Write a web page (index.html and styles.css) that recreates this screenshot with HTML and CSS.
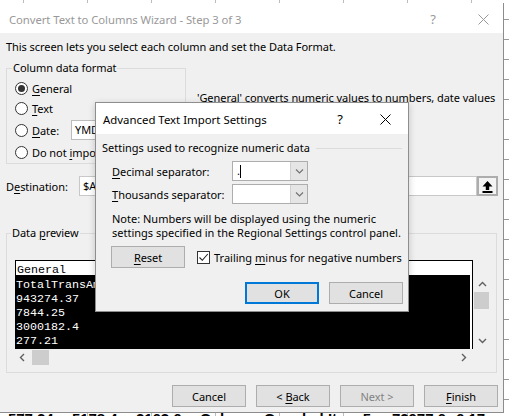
FILE: index.html
```html
<!DOCTYPE html>
<html>
<head>
<meta charset="utf-8">
<title>Convert Text to Columns Wizard</title>
<link rel="stylesheet" href="styles.css">
</head>
<body>
<div class="sheet">
  <div class="top-strip"></div>
  <div class="wizard">
    <div class="titlebar">
      <span class="title">Convert Text to Columns Wizard - Step 3 of 3</span>
      <span class="tb-help">?</span>
      <span class="tb-close"><svg width="11" height="11" viewBox="0 0 11 11"><path d="M0.5 0.5L10.5 10.5M10.5 0.5L0.5 10.5" stroke="#999" stroke-width="1" fill="none"/></svg></span>
    </div>
    <div class="content">
      <p class="intro">This screen lets you select each column and set the Data Format.</p>
      <div class="format-row">
        <fieldset class="group fmt">
          <legend>Column data format</legend>
          <div class="radios">
            <label class="radio r1"><span class="rb on"></span><span><u>G</u>eneral</span></label>
            <label class="radio r2"><span class="rb"></span><span><u>T</u>ext</span></label>
            <label class="radio r3"><span class="rb"></span><span class="date-lbl"><u>D</u>ate:</span><span class="datecombo">YMD</span></label>
            <label class="radio r4"><span class="rb"></span><span>Do not <u>i</u>mport column (skip)</span></label>
          </div>
        </fieldset>
        <div class="desc">'General' converts numeric values to numbers, date values<br>to dates, and all remaining values to text.</div>
      </div>
      <div class="dest-row">
        <span class="dest-lbl">D<u>e</u>stination:</span>
        <span class="dest-input">$A$1</span>
        <span class="dest-btn"><svg width="13" height="13" viewBox="0 0 13 13"><path d="M6.5 1L1.5 6.5H4.8V10H8.2V6.5H11.5Z" fill="#000"/><rect x="1.5" y="11" width="10" height="2" fill="#000"/></svg></span>
      </div>
      <fieldset class="group preview">
        <legend>Data <u>p</u>review</legend>
        <div class="pv">
          <div class="pv-head">General</div>
          <div class="pv-corner"></div>
          <div class="pv-data">
            <div>TotalTransAmount</div>
            <div>943274.37</div>
            <div>7844.25</div>
            <div>3000182.4</div>
            <div>277.21</div>
          </div>
          <div class="pv-vscroll">
            <svg class="sa-up" width="9" height="6" viewBox="0 0 9 6"><path d="M1 5L4.5 1.5L8 5" stroke="#606060" stroke-width="1.4" fill="none"/></svg>
            <span class="vthumb"></span>
            <svg class="sa-down" width="9" height="6" viewBox="0 0 9 6"><path d="M1 1L4.5 4.5L8 1" stroke="#606060" stroke-width="1.4" fill="none"/></svg>
          </div>
          <div class="pv-hscroll">
            <svg class="sa-left" width="6" height="9" viewBox="0 0 6 9"><path d="M5 1L1.5 4.5L5 8" stroke="#606060" stroke-width="1.4" fill="none"/></svg>
            <span class="hthumb"></span>
            <svg class="sa-right" width="6" height="9" viewBox="0 0 6 9"><path d="M1 1L4.5 4.5L1 8" stroke="#606060" stroke-width="1.4" fill="none"/></svg>
          </div>
        </div>
      </fieldset>
      <div class="buttons">
        <button class="btn"><span>Cancel</span></button>
        <button class="btn"><span>&lt; <u>B</u>ack</span></button>
        <button class="btn disabled"><span>Next &gt;</span></button>
        <button class="btn"><span><u>F</u>inish</span></button>
      </div>
    </div>
  </div>
  <div class="bottom-strip">
    <span>577.24</span><span>5178.4</span><span>2163.6</span><span>Column</span><span>Coupled</span><span>Item.5</span><span>72977.6</span><span>6.17</span>
  </div>

  <div class="dialog">
    <div class="dlg-title">
      <span class="dlg-name">Advanced Text Import Settings</span>
      <span class="dlg-help">?</span>
      <span class="dlg-close"><svg width="11" height="11" viewBox="0 0 11 11"><path d="M0.5 0.5L10.5 10.5M10.5 0.5L0.5 10.5" stroke="#000" stroke-width="1" fill="none"/></svg></span>
    </div>
    <div class="dlg-body">
      <div class="dlg-head"><span>Settings used to recognize numeric data</span><span class="sep"></span></div>
      <div class="field f1">
        <span class="flabel"><u>D</u>ecimal separator:</span>
        <span class="combo"><span class="val">.<span class="caret"></span></span><span class="dd"><svg width="9" height="5" viewBox="0 0 9 5"><path d="M1 0.5L4.5 4L8 0.5" stroke="#707070" stroke-width="1.1" fill="none"/></svg></span></span>
      </div>
      <div class="field f2">
        <span class="flabel"><u>T</u>housands separator:</span>
        <span class="combo"><span class="val"></span><span class="dd"><svg width="9" height="5" viewBox="0 0 9 5"><path d="M1 0.5L4.5 4L8 0.5" stroke="#707070" stroke-width="1.1" fill="none"/></svg></span></span>
      </div>
      <p class="note">Note: Numbers will be displayed using the numeric<br>settings specified in the Regional Settings control panel.</p>
      <div class="reset-row">
        <button class="btn reset"><span><u>R</u>eset</span></button>
        <span class="cb"><svg width="11" height="11" viewBox="0 0 11 11"><path d="M1.5 5.5L4.3 8.3L9.8 2" stroke="#222" stroke-width="1.1" fill="none"/></svg></span>
        <span class="cb-lbl">Trailing <u>m</u>inus for negative numbers</span>
      </div>
      <div class="dlg-btns">
        <button class="btn ok"><span>OK</span></button>
        <button class="btn"><span>Cancel</span></button>
      </div>
    </div>
  </div>
</div>
</body>
</html>
```
FILE: styles.css
```css
* { box-sizing: border-box; margin: 0; padding: 0; }
html, body { width: 509px; height: 416px; overflow: hidden; }
body {
  font-family: "Noto Sans", "Open Sans", sans-serif;
  font-size: 11px;
  letter-spacing: -0.06px;
  color: #000;
  background: #fff;
}
u { text-decoration: underline; text-underline-offset: 2px; text-decoration-thickness: 1px; }

.sheet {
  position: relative;
  width: 509px;
  height: 416px;
  display: flex;
  flex-direction: column;
  background-color: #fff;
  background-image:
    repeating-linear-gradient(90deg, transparent 0 23px, #bcbcbc 23px 24px, transparent 24px 64px),
    repeating-linear-gradient(180deg, transparent 0 19px, #9a9a9a 19px 20px);
}
.top-strip { height: 3px; flex: none; }

/* ---------- main wizard window ---------- */
.wizard {
  flex: none;
  width: 504px;
  height: 410px;
  background: #f0f0f0;
  border-right: 1px solid #8c8c8c;
  border-bottom: 1px solid #8c8c8c;
  display: flex;
  flex-direction: column;
}
.titlebar {
  height: 30px;
  flex: none;
  background: #fff;
  display: flex;
  align-items: center;
  padding-left: 9px;
  padding-top: 2px;
  font-size: 11.3px;
}
.title { flex: 1; color: #999; white-space: nowrap; }
.tb-help { width: 20px; text-align: center; color: #999; margin-right: 20px; font-size: 13px; }
.tb-close { width: 40px; display: flex; justify-content: center; align-items: center; }

.content { padding: 0 5px 0 6px; display: flex; flex-direction: column; }
.intro { margin-top: 6px; line-height: 16px; white-space: nowrap; }

.format-row { display: flex; margin-top: 5px; height: 105px; }
.group { border: 1px solid #dcdcdc; min-width: 0; flex: none; }
.group legend { padding: 0 1px; line-height: 16px; }
.fmt { width: 180px; height: 104px; padding: 2px 4px 0 5px; overflow: hidden; }
.radios { margin-left: 3px; display: flex; flex-direction: column; }
.radio { display: flex; align-items: center; height: 20px; white-space: nowrap; }
.r3, .r4 { margin-top: 2px; }
.rb {
  width: 13px; height: 13px; flex: none;
  border: 1px solid #333; border-radius: 50%;
  background: #fff; margin-right: 4px;
  display: grid; place-items: center;
}
.rb.on::after { content: ""; width: 7px; height: 7px; border-radius: 50%; background: #333; }
.date-lbl { width: 39px; flex: none; }
.datecombo {
  width: 100px; height: 20px; border: 1px solid #bcbcbc; background: #fff;
  padding-left: 3px; line-height: 18px; flex: none;
}
.desc { flex: none; margin-left: 11px; margin-top: 30px; line-height: 16px; white-space: nowrap; }

.dest-row { display: flex; align-items: center; margin-top: 11px; height: 20px; }
.dest-lbl { width: 73px; flex: none; }
.dest-input {
  width: 398px; height: 20px; background: #fff; border: 1px solid #c8c8c8;
  padding-left: 3px; line-height: 18px; flex: none;
}
.dest-btn {
  width: 21px; height: 20px; border: 2px solid #adadad; background: #f4f4f4;
  display: grid; place-items: center; flex: none;
}

.preview { width: 491px; height: 148px; margin-top: 29px; padding: 19px 4px 0 4px; }
.pv {
  margin-left: 4px;
  display: grid;
  grid-template-columns: 458px 17px;
  grid-template-rows: 15px 74px 17px;
}
.pv-head {
  background: #fff;
  border: 1px solid #000;
  border-bottom: none;
  font-family: "Liberation Mono", "DejaVu Sans Mono", monospace;
  font-size: 11.67px;
  letter-spacing: 0;
  line-height: 12px;
  padding: 3px 0 0 1px;
  overflow: hidden;
}
.pv-data {
  background: linear-gradient(to left, #000 0 1px, #fff 1px 3px, #000 3px);
  border-left: 1px solid #000;
  color: #fff;
  font-family: "Liberation Mono", "DejaVu Sans Mono", monospace;
  font-size: 11.67px;
  letter-spacing: 0;
  line-height: 14px;
  padding: 3px 0 0 0;
  overflow: hidden;
}
.pv-vscroll { display: flex; flex-direction: column; align-items: center; }
.sa-up { margin-top: 6px; margin-left: 1px; }
.vthumb { width: 15px; height: 17px; background: #cdcdcd; margin-top: 5px; }
.sa-down { margin-top: auto; margin-bottom: 5px; margin-left: 1px; }
.pv-hscroll { display: flex; align-items: center; padding-left: 4px; }
.hthumb { width: 17px; height: 15px; background: #cdcdcd; margin-left: 7px; }
.sa-right { margin-left: auto; margin-right: 6px; }

.buttons { display: flex; justify-content: flex-end; gap: 10px; margin-top: 12px; }
.btn {
  width: 74px; height: 22px;
  background: #e1e1e1; border: 1px solid #adadad;
  font-family: inherit; font-size: 11px; letter-spacing: -0.06px; color: #000;
  display: inline-flex; align-items: center; justify-content: center;
  white-space: pre;
}
.btn.disabled { color: #838383; }

.bottom-strip {
  flex: none; height: 3px; overflow: hidden; display: flex;
  font-family: "Liberation Sans", sans-serif; font-size: 15px; font-weight: bold; line-height: 15px;
}
.bottom-strip span { width: 64px; flex: none; padding-left: 8px; margin-top: -2px; }

/* ---------- advanced settings dialog (overlay) ---------- */
.dialog {
  position: absolute;
  left: 95px; top: 102px;
  width: 314px; height: 210px;
  background: #f0f0f0;
  border: 1px solid #8e8e8e;
  box-shadow: 0 2px 7px rgba(0,0,0,0.2);
  display: flex; flex-direction: column;
  letter-spacing: 0;
}
.dlg-title {
  height: 31px; flex: none; background: #fff;
  display: flex; align-items: center; padding-left: 7px; padding-top: 1px;
  font-size: 11.4px;
}
.dlg-name { flex: 1; white-space: nowrap; }
.dlg-help { width: 20px; text-align: center; margin-right: 12px; font-size: 13px; }
.dlg-close { width: 46px; display: flex; justify-content: center; align-items: center; }
.dlg-body { padding: 0 5px 0 6px; display: flex; flex-direction: column; }
.dlg-head { display: flex; align-items: center; margin-top: 6px; line-height: 16px; white-space: nowrap; }
.dlg-head .sep { flex: 1; height: 1px; background: #dcdcdc; margin-left: 6px; margin-right: 1px; }
.field { display: flex; align-items: center; padding-left: 10px; height: 20px; }
.f1 { margin-top: 5px; }
.f2 { margin-top: 3px; }
.flabel { width: 120px; flex: none; white-space: nowrap; }
.combo { display: flex; width: 76px; height: 20px; border: 1px solid #adadad; background: #fff; flex: none; }
.combo .val { flex: 1; padding-left: 4px; line-height: 18px; display: flex; align-items: center; }
.caret { display: inline-block; width: 1px; height: 13px; background: #000; }
.combo .dd { width: 17px; background: #e5e5e5; border-left: 1px solid #d0d0d0; display: grid; place-items: center; }
.note { margin-top: 8px; padding-left: 10px; line-height: 14px; white-space: nowrap; }
.reset-row { display: flex; align-items: center; margin-top: 6px; padding-left: 9px; }
.cb {
  width: 13px; height: 13px; border: 1px solid #333; background: #fff; flex: none;
  margin-left: 12px; margin-right: 4px; display: grid; place-items: center;
}
.cb-lbl { white-space: nowrap; }
.dlg-btns { display: flex; justify-content: flex-end; gap: 10px; margin-top: 14px; }
.btn.ok { border: 2px solid #0078d7; letter-spacing: 0; }
```
